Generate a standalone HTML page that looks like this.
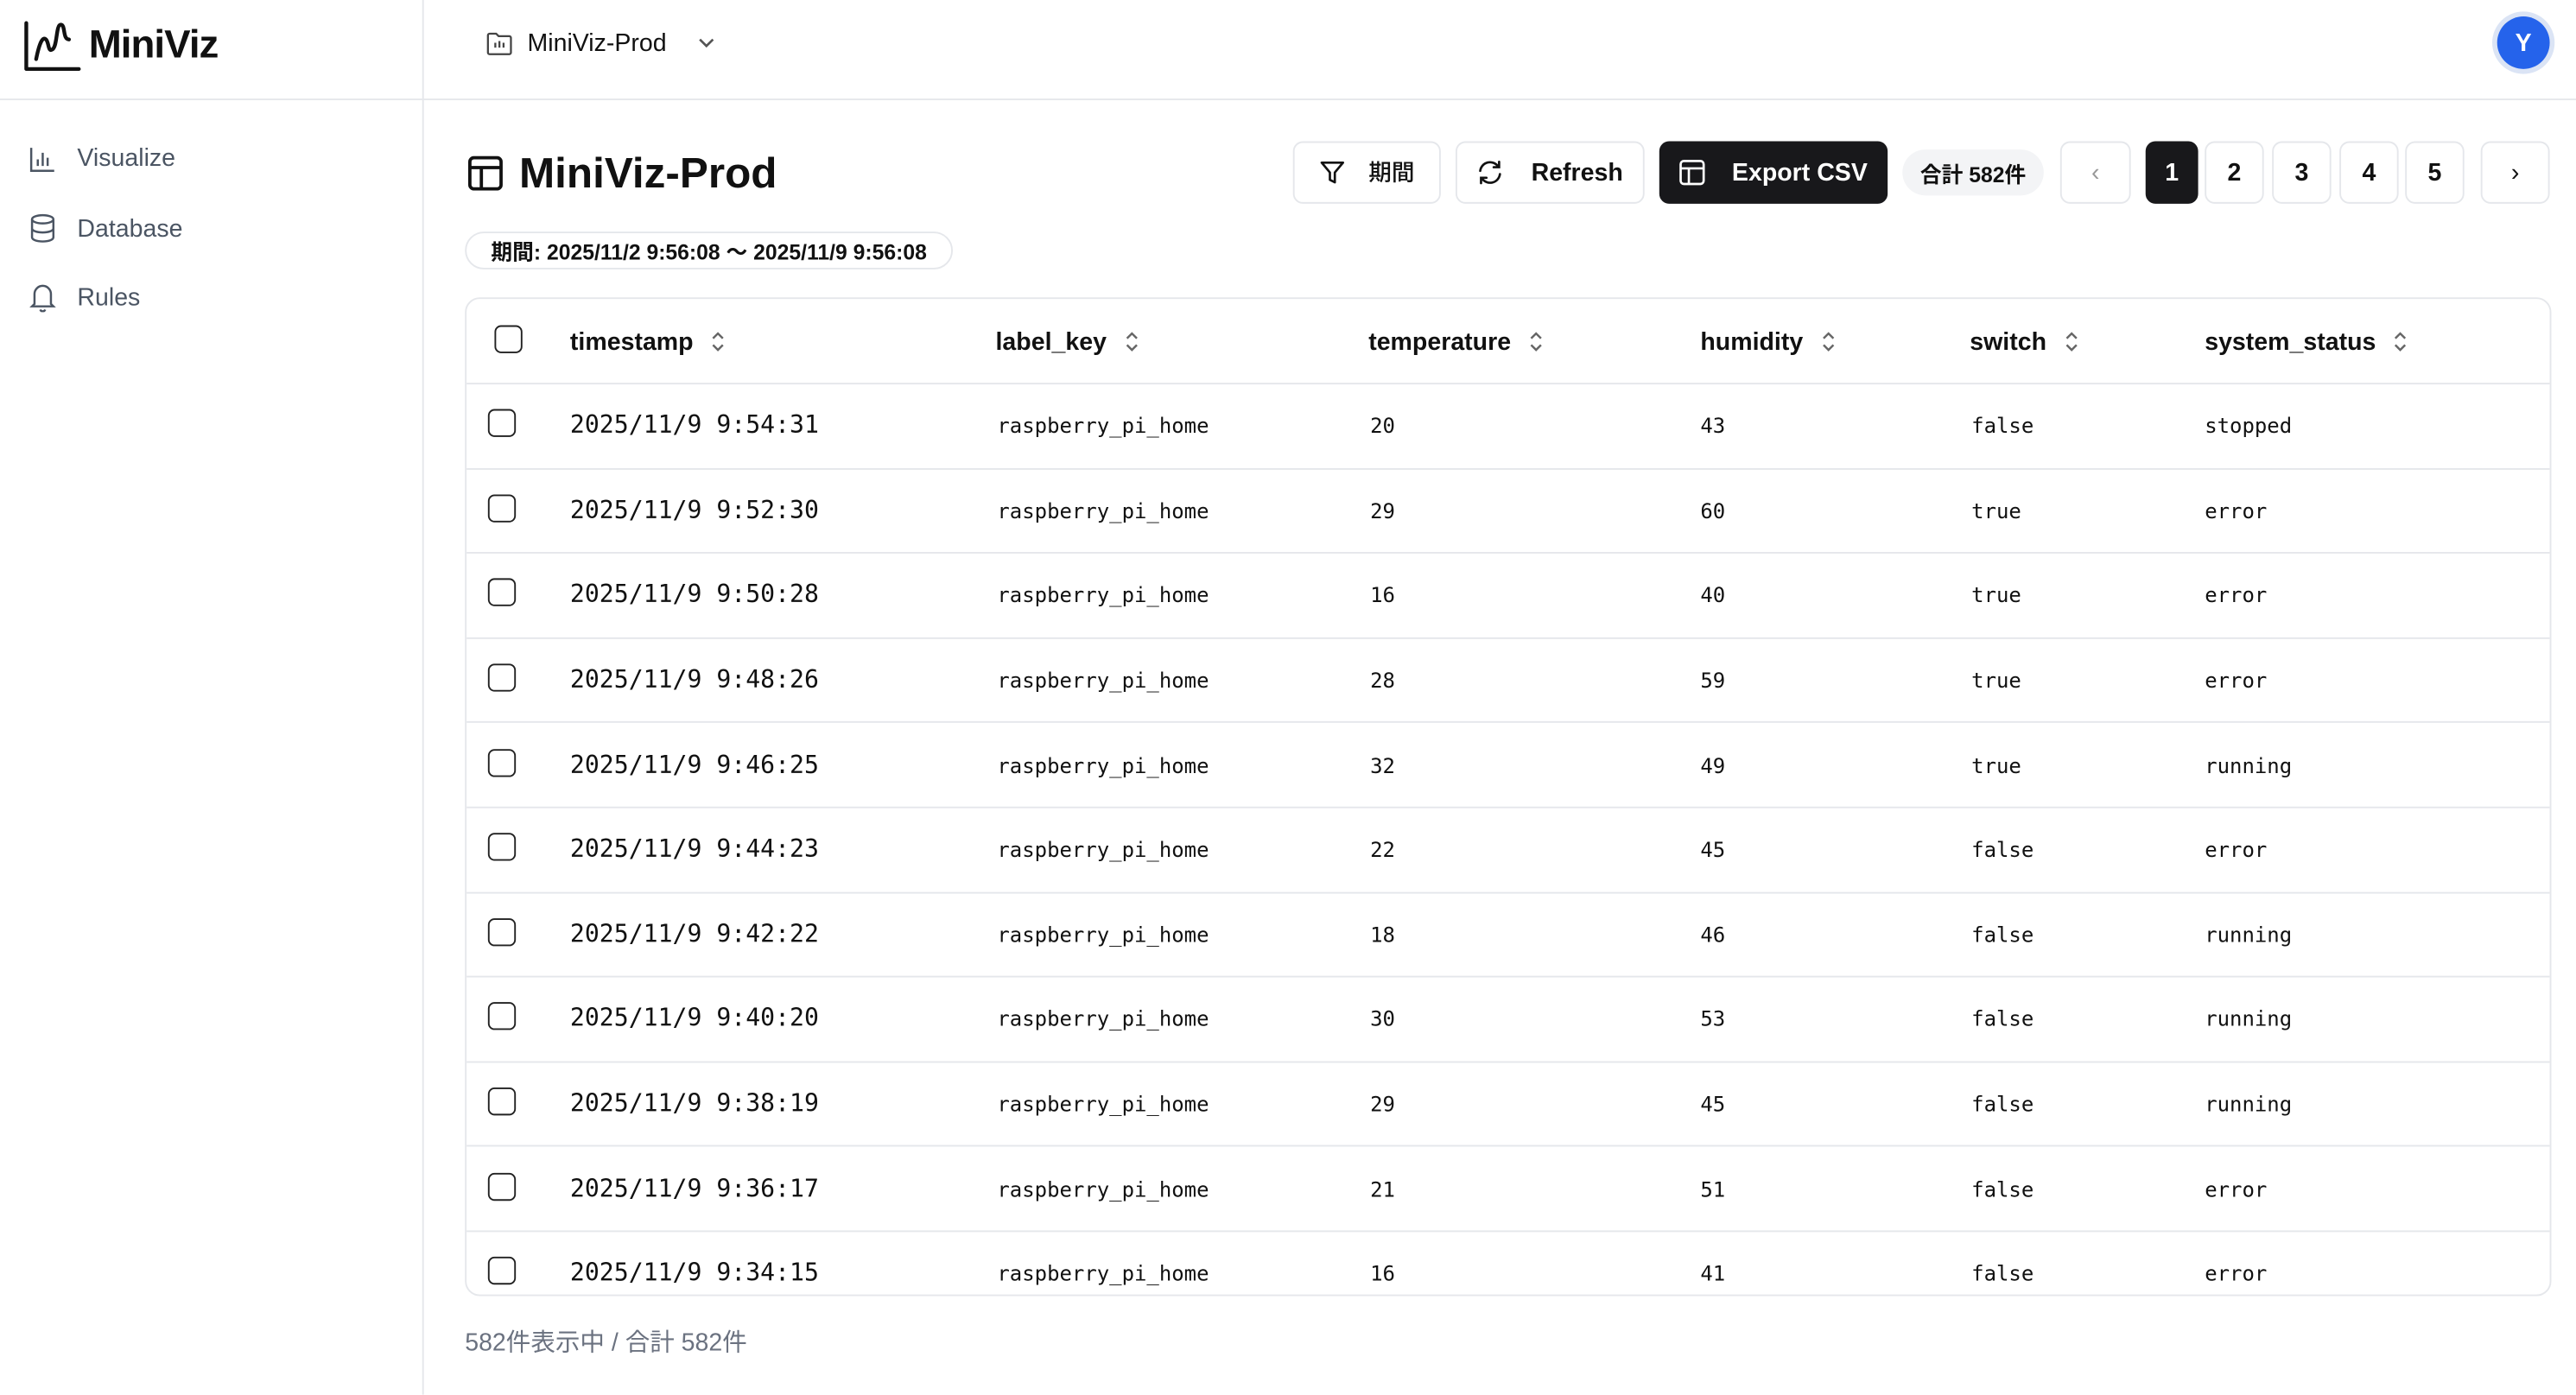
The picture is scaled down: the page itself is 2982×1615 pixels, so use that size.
<!DOCTYPE html>
<html><head><meta charset="utf-8"><style>
*{box-sizing:border-box;margin:0;padding:0}
html,body{width:2982px;height:1614px;overflow:hidden;background:#fff}
#w{position:absolute;left:0;top:0;width:1568px;height:849px;transform:scale(1.90179);transform-origin:0 0;font-family:"Liberation Sans","Noto Sans CJK JP",sans-serif;color:#111}
.a{position:absolute}
.btn{position:absolute;top:86px;height:38px;border:1px solid #e5e7eb;border-radius:6px;background:#fff;display:flex;align-items:center;justify-content:center;font-size:15px;font-weight:600;color:#111}
.mono{font-family:"DejaVu Sans Mono",monospace}
.row{position:absolute;left:0;width:100%;height:51.6px;border-top:1px solid #e5e7eb}
.row span{position:absolute;top:50%;transform:translateY(-50%);font-size:12.6px;color:#111}
.row .ts{font-size:14.8px;left:63px}
.cb{position:absolute;left:13px;top:50%;margin-top:-10px;width:17px;height:17px;border:1.4px solid #222;border-radius:4px}
.h{position:absolute;top:0;height:52px;display:flex;align-items:center;font-size:15px;font-weight:600}
.h svg{margin-left:10px}
.nav{position:absolute;left:18px;display:flex;align-items:center;font-size:15px;color:#4b5563}
.nav svg{margin-right:13px}
</style></head><body><div id="w">
<div class="a" style="left:257px;top:0;width:1px;height:849px;background:#e5e7eb"></div>
<div class="a" style="left:0;top:60px;width:1568px;height:1px;background:#e5e7eb"></div>
<svg class="a" style="left:14px;top:12px" width="36" height="32" viewBox="0 0 36 32" fill="none" stroke="#111" stroke-width="2.3" stroke-linecap="round" stroke-linejoin="round"><path d="M2 2V30H34"/><path d="M8 24C10 14 12 10 14 12C16 14 15 20 18 18C21 16 20 3 23 3C26 3 24 12 28 12"/></svg>
<div class="a" style="left:54px;top:14px;font-size:24px;font-weight:700;letter-spacing:-0.5px">MiniViz</div>
<div class="nav" style="top:88px"><svg width="16" height="16" viewBox="0 0 16 16" fill="none" stroke="#4b5563" stroke-width="1.3"><path d="M1 1V15H15M5 12V8M8 12V4M11 12V7"/></svg>Visualize</div>
<div class="nav" style="top:130px"><svg width="16" height="18" viewBox="0 0 16 18" fill="none" stroke="#4b5563" stroke-width="1.3"><ellipse cx="8" cy="3.5" rx="6.5" ry="2.5"/><path d="M1.5 3.5V14.5C1.5 16 4.5 17 8 17S14.5 16 14.5 14.5V3.5M1.5 9C1.5 10.5 4.5 11.5 8 11.5S14.5 10.5 14.5 9"/></svg>Database</div>
<div class="nav" style="top:172px"><svg width="16" height="18" viewBox="0 0 16 18" fill="none" stroke="#4b5563" stroke-width="1.3"><path d="M3 13V7A5 5 0 0 1 13 7V13L14.5 14.5H1.5ZM6.5 16.5A1.6 1.6 0 0 0 9.5 16.5"/></svg>Rules</div>
<svg class="a" style="left:296px;top:19px" width="16" height="15" viewBox="0 0 16 15" fill="none" stroke="#444" stroke-width="1.2"><path d="M1 2.5A1 1 0 0 1 2 1.5H6L7.5 3H14A1 1 0 0 1 15 4V13A1 1 0 0 1 14 14H2A1 1 0 0 1 1 13Z"/><path d="M5.5 7V10M8 6V10M10.5 7V10"/></svg>
<div class="a" style="left:321px;top:18px;font-size:15px;font-weight:500">MiniViz-Prod</div>
<svg class="a" style="left:424px;top:21px" width="12" height="10" viewBox="0 0 12 10" fill="none" stroke="#555" stroke-width="1.4"><path d="M2 3L6 7L10 3"/></svg>
<div class="a" style="left:1517px;top:7px;width:38px;height:38px;border-radius:50%;background:#dbe4f5"></div>
<div class="a" style="left:1520px;top:10px;width:32px;height:32px;border-radius:50%;background:#2563eb;color:#fff;font-size:15px;font-weight:600;display:flex;align-items:center;justify-content:center">Y</div>
<svg class="a" style="left:285px;top:95px" width="21" height="21" viewBox="0 0 21 21" fill="none" stroke="#111" stroke-width="2"><rect x="1" y="1" width="19" height="19" rx="2.5"/><path d="M1 7H20M8 7V20"/></svg>
<div class="a" style="left:316px;top:90px;font-size:26px;font-weight:700">MiniViz-Prod</div>
<div class="btn" style="left:787px;width:90px"><svg width="16" height="16" viewBox="0 0 16 16" fill="none" stroke="#111" stroke-width="1.4" stroke-linejoin="round"><path d="M1.5 2H14.5L9.5 8V14L6.5 12.5V8Z"/></svg><span style="margin-left:14px;font-weight:500;font-size:14px">期間</span></div>
<div class="btn" style="left:886px;width:115px"><svg width="16" height="16" viewBox="0 0 16 16" fill="none" stroke="#111" stroke-width="1.4" stroke-linecap="round"><path d="M2 7A6 6 0 0 1 13 4.5M14 9A6 6 0 0 1 3 11.5M13.5 1.5V4.8H10.2M2.5 14.5V11.2H5.8"/></svg><span style="margin-left:17px">Refresh</span></div>
<div class="btn" style="left:1010px;width:139px;background:#18181b;border-color:#18181b;color:#fff"><svg width="16" height="16" viewBox="0 0 16 16" fill="none" stroke="#fff" stroke-width="1.4"><rect x="1" y="1" width="14" height="14" rx="2"/><path d="M1 5.5H15M6 5.5V15"/></svg><span style="margin-left:16px">Export CSV</span></div>
<div class="a" style="left:1158px;top:91px;width:86px;height:28px;border-radius:14px;background:#f3f4f6;font-size:13px;font-weight:600;display:flex;align-items:center;justify-content:center">合計 582件</div>
<div class="btn" style="left:1254px;width:43px;color:#999;font-weight:400">‹</div>
<div class="btn" style="left:1306px;width:32px;background:#18181b;border-color:#18181b;color:#fff">1</div>
<div class="btn" style="left:1342px;width:36px">2</div>
<div class="btn" style="left:1383px;width:36px">3</div>
<div class="btn" style="left:1424px;width:36px">4</div>
<div class="btn" style="left:1464px;width:36px">5</div>
<div class="btn" style="left:1510px;width:42px;font-weight:400">›</div>
<div class="a" style="left:283px;top:141px;width:297px;height:23px;border:1px solid #e5e7eb;border-radius:12px;font-size:13px;font-weight:600;display:flex;align-items:center;justify-content:center">期間: 2025/11/2 9:56:08 〜 2025/11/9 9:56:08</div>
<div class="a" style="left:283px;top:181px;width:1270px;height:608px;border:1px solid #e5e7eb;border-radius:9px;overflow:hidden">
<div class="cb" style="top:26px;left:17px"></div>
<div class="h" style="left:63px">timestamp<svg width="10" height="16" viewBox="0 0 10 16" fill="none" stroke="#666" stroke-width="1.3"><path d="M2 6L5 3L8 6M2 10L5 13L8 10"/></svg></div>
<div class="h" style="left:322px">label_key<svg width="10" height="16" viewBox="0 0 10 16" fill="none" stroke="#666" stroke-width="1.3"><path d="M2 6L5 3L8 6M2 10L5 13L8 10"/></svg></div>
<div class="h" style="left:549px">temperature<svg width="10" height="16" viewBox="0 0 10 16" fill="none" stroke="#666" stroke-width="1.3"><path d="M2 6L5 3L8 6M2 10L5 13L8 10"/></svg></div>
<div class="h" style="left:751px">humidity<svg width="10" height="16" viewBox="0 0 10 16" fill="none" stroke="#666" stroke-width="1.3"><path d="M2 6L5 3L8 6M2 10L5 13L8 10"/></svg></div>
<div class="h" style="left:915px">switch<svg width="10" height="16" viewBox="0 0 10 16" fill="none" stroke="#666" stroke-width="1.3"><path d="M2 6L5 3L8 6M2 10L5 13L8 10"/></svg></div>
<div class="h" style="left:1058px">system_status<svg width="10" height="16" viewBox="0 0 10 16" fill="none" stroke="#666" stroke-width="1.3"><path d="M2 6L5 3L8 6M2 10L5 13L8 10"/></svg></div>
<div class="mono">
<div class="row" style="top:51px"><div class="cb"></div><span class="ts">2025/11/9 9:54:31</span><span style="left:323px">raspberry_pi_home</span><span style="left:550px">20</span><span style="left:751px">43</span><span style="left:916px">false</span><span style="left:1058px">stopped</span></div>
<div class="row" style="top:102.6px"><div class="cb"></div><span class="ts">2025/11/9 9:52:30</span><span style="left:323px">raspberry_pi_home</span><span style="left:550px">29</span><span style="left:751px">60</span><span style="left:916px">true</span><span style="left:1058px">error</span></div>
<div class="row" style="top:154.2px"><div class="cb"></div><span class="ts">2025/11/9 9:50:28</span><span style="left:323px">raspberry_pi_home</span><span style="left:550px">16</span><span style="left:751px">40</span><span style="left:916px">true</span><span style="left:1058px">error</span></div>
<div class="row" style="top:205.8px"><div class="cb"></div><span class="ts">2025/11/9 9:48:26</span><span style="left:323px">raspberry_pi_home</span><span style="left:550px">28</span><span style="left:751px">59</span><span style="left:916px">true</span><span style="left:1058px">error</span></div>
<div class="row" style="top:257.4px"><div class="cb"></div><span class="ts">2025/11/9 9:46:25</span><span style="left:323px">raspberry_pi_home</span><span style="left:550px">32</span><span style="left:751px">49</span><span style="left:916px">true</span><span style="left:1058px">running</span></div>
<div class="row" style="top:309px"><div class="cb"></div><span class="ts">2025/11/9 9:44:23</span><span style="left:323px">raspberry_pi_home</span><span style="left:550px">22</span><span style="left:751px">45</span><span style="left:916px">false</span><span style="left:1058px">error</span></div>
<div class="row" style="top:360.6px"><div class="cb"></div><span class="ts">2025/11/9 9:42:22</span><span style="left:323px">raspberry_pi_home</span><span style="left:550px">18</span><span style="left:751px">46</span><span style="left:916px">false</span><span style="left:1058px">running</span></div>
<div class="row" style="top:412.2px"><div class="cb"></div><span class="ts">2025/11/9 9:40:20</span><span style="left:323px">raspberry_pi_home</span><span style="left:550px">30</span><span style="left:751px">53</span><span style="left:916px">false</span><span style="left:1058px">running</span></div>
<div class="row" style="top:463.8px"><div class="cb"></div><span class="ts">2025/11/9 9:38:19</span><span style="left:323px">raspberry_pi_home</span><span style="left:550px">29</span><span style="left:751px">45</span><span style="left:916px">false</span><span style="left:1058px">running</span></div>
<div class="row" style="top:515.4px"><div class="cb"></div><span class="ts">2025/11/9 9:36:17</span><span style="left:323px">raspberry_pi_home</span><span style="left:550px">21</span><span style="left:751px">51</span><span style="left:916px">false</span><span style="left:1058px">error</span></div>
<div class="row" style="top:567px"><div class="cb"></div><span class="ts">2025/11/9 9:34:15</span><span style="left:323px">raspberry_pi_home</span><span style="left:550px">16</span><span style="left:751px">41</span><span style="left:916px">false</span><span style="left:1058px">error</span></div>
</div></div>
<div class="a" style="left:283px;top:806px;font-size:15px;color:#6b7280">582件表示中 / 合計 582件</div>
</div></body></html>
